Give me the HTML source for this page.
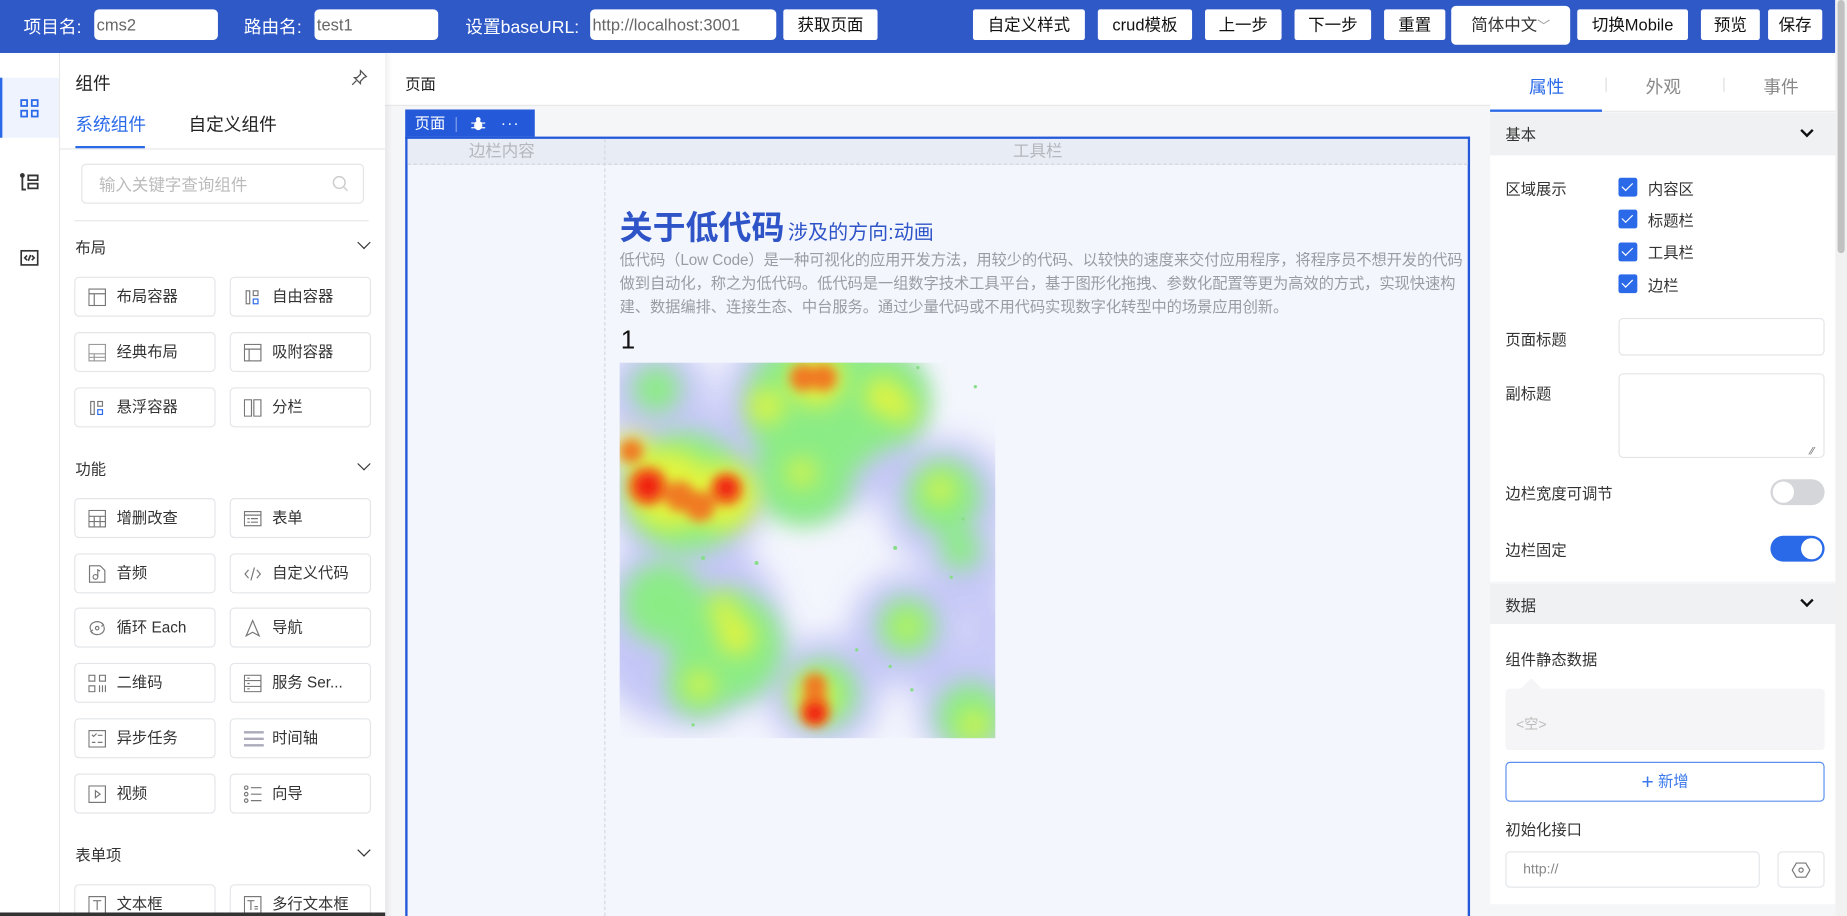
<!DOCTYPE html>
<html><head><meta charset="utf-8">
<style>
*{box-sizing:border-box;margin:0;padding:0}
html,body{width:1847px;height:916px;overflow:hidden;background:#fff}
body{font-family:"Liberation Sans","Noto Sans CJK SC",sans-serif;color:#222}
#w{position:absolute;left:0;top:0;width:1568px;height:778px;transform:scale(1.17793,1.1774);transform-origin:0 0;overflow:hidden;background:#fff}
.a{position:absolute}
.hdr{left:0;top:0;width:1558px;height:45px;background:#3059c8}
.ht{color:#fff;font-size:15px;top:12px}
.hi{top:8px;height:26px;background:#fff;border-radius:4px;font-size:14px;color:#666;padding:4px 2px;line-height:18px}
.hb{top:8px;height:26px;background:#fff;border-radius:2px;font-size:14px;color:#111;text-align:center;line-height:26px}
.rail{left:0;top:45px;width:51px;height:733px;border-right:1px solid #e8e8e8}
.btn{width:120px;height:34px;border:1px solid #e3e5e8;border-radius:4px;font-size:13px;color:#333;line-height:32px;padding-left:35px}
.btn svg{position:absolute;left:11px;top:9px}
.sec{font-size:13px;color:#333}
.chev{width:8px;height:8px;border-right:1.5px solid #333;border-bottom:1.5px solid #333;transform:rotate(45deg)}
.lbl{font-size:13px;color:#333}
.cb{width:16px;height:16px;background:#2a6ae9;border-radius:2px}
.cb:after{content:"";position:absolute;left:5px;top:2px;width:4px;height:8px;border-right:1.3px solid #fff;border-bottom:1.3px solid #fff;transform:rotate(45deg)}
.inp{border:1px solid #e3e5e8;border-radius:4px;background:#fff}
</style></head><body><div id="w">
<div class="a hdr"></div>
<div class="a ht" style="left:20px">项目名:</div>
<div class="a hi" style="left:80px;width:105px">cms2</div>
<div class="a ht" style="left:207px">路由名:</div>
<div class="a hi" style="left:267px;width:105px">test1</div>
<div class="a ht" style="left:395px">设置baseURL:</div>
<div class="a hi" style="left:501px;width:158px">http://localhost:3001</div>
<div class="a hb" style="left:665px;width:80px">获取页面</div>
<div class="a hb" style="left:826px;width:95px">自定义样式</div>
<div class="a hb" style="left:932px;width:80px">crud模板</div>
<div class="a hb" style="left:1023px;width:65px">上一步</div>
<div class="a hb" style="left:1099px;width:65px">下一步</div>
<div class="a hb" style="left:1175px;width:52px">重置</div>
<div class="a hb" style="left:1232px;top:5px;height:33px;line-height:33px;width:101px;border-radius:4px;color:#333">简体中文<span style="color:#999;font-size:11px">﹀</span></div>
<div class="a hb" style="left:1339px;width:94px">切换Mobile</div>
<div class="a hb" style="left:1444px;width:50px">预览</div>
<div class="a hb" style="left:1501px;width:46px">保存</div>
<div class="a" style="left:1558px;top:0;width:10px;height:778px;background:#f1f1f1"></div>
<div class="a" style="left:1560px;top:0;width:6px;height:215px;background:#c1c1c1;border-radius:3px"></div>

<div class="a rail"></div>
<div class="a" style="left:0;top:66px;width:50px;height:51px;background:#eef3fd;border-left:2px solid #2a6ae9"></div>
<svg class="a" style="left:17px;top:84px" width="16" height="16" viewBox="0 0 16 16" fill="none" stroke="#2a6ae9" stroke-width="1.5"><rect x="1" y="1" width="5" height="5"/><rect x="10" y="1" width="5" height="5"/><rect x="1" y="10" width="5" height="5"/><rect x="10" y="10" width="5" height="5"/></svg>
<svg class="a" style="left:17px;top:147px" width="16" height="16" viewBox="0 0 16 16" fill="none" stroke="#333" stroke-width="1.5"><circle cx="2" cy="2" r="1.3" fill="#333"/><path d="M2 3v11h3M7 2h8v4H7zM7 9h8v4H7z"/></svg>
<svg class="a" style="left:17px;top:212px" width="16" height="14" viewBox="0 0 16 14" fill="none" stroke="#333" stroke-width="1.4"><rect x="1" y="1" width="14" height="12"/><path d="M6 5L4 7l2 2M10 5l2 2-2 2M9 4.5L7 9.5"/></svg>

<div class="a" style="left:64px;top:60px;font-size:15px;color:#222">组件</div>
<svg class="a" style="left:298px;top:59px" width="14" height="14" viewBox="0 0 14 14" fill="none" stroke="#555" stroke-width="1.1"><path d="M8 1l5 5-2 1-3 3 0 2-5-5 2 0 3-3z M4.5 9.5L1 13"/></svg>
<div class="a" style="left:64px;top:95px;font-size:15px;color:#2a6ae9">系统组件</div>
<div class="a" style="left:160px;top:95px;font-size:15px;color:#222">自定义组件</div>
<div class="a" style="left:64px;top:124px;width:59px;height:2px;background:#2a6ae9"></div>
<div class="a" style="left:51px;top:126px;width:276px;height:1px;background:#e8e8e8"></div>
<div class="a inp" style="left:69px;top:139px;width:240px;height:34px;padding:7px 14px;font-size:14px;color:#bbb">输入关键字查询组件</div>
<svg class="a" style="left:282px;top:149px" width="14" height="14" viewBox="0 0 14 14" fill="none" stroke="#ccc" stroke-width="1.2"><circle cx="6" cy="6" r="5"/><path d="M10 10l3 3"/></svg>
<div class="a" style="left:63px;top:187px;width:250px;height:1px;background:#e8e8e8"></div>

<div class="a sec" style="left:64px;top:200px">布局</div><div class="a chev" style="left:305px;top:202px"></div>
<div class="a sec" style="left:64px;top:388px">功能</div><div class="a chev" style="left:305px;top:390px"></div>
<div class="a sec" style="left:64px;top:716px">表单项</div><div class="a chev" style="left:305px;top:718px"></div>

<div class="a btn" style="left:63px;top:235px"><svg width="15" height="15" viewBox="0 0 15 15" fill="none" stroke="#777"><rect x=".5" y=".5" width="14" height="14"/><path d="M.5 4.5h14M5 4.5v10"/></svg>布局容器</div>
<div class="a btn" style="left:195px;top:235px"><svg width="15" height="15" viewBox="0 0 15 15" fill="none" stroke="#777"><rect x="2" y="2" width="3" height="11"/><rect x="8" y="2" width="4" height="4"/><rect x="8" y="9" width="4" height="4" stroke="#2a6ae9"/></svg>自由容器</div>
<div class="a btn" style="left:63px;top:282px"><svg width="15" height="15" viewBox="0 0 15 15" fill="none" stroke="#999"><rect x=".5" y=".5" width="14" height="14"/><path d="M.5 8.5h14M.5 11.5h14M5 8.5v6"/></svg>经典布局</div>
<div class="a btn" style="left:195px;top:282px"><svg width="15" height="15" viewBox="0 0 15 15" fill="none" stroke="#777"><rect x=".5" y=".5" width="14" height="14"/><path d="M.5 4.5h14M4.5 4.5v10"/></svg>吸附容器</div>
<div class="a btn" style="left:63px;top:329px"><svg width="15" height="15" viewBox="0 0 15 15" fill="none" stroke="#777"><rect x="2" y="2" width="3" height="11"/><rect x="8" y="2" width="4" height="4"/><rect x="8" y="9" width="4" height="4" stroke="#2a6ae9"/></svg>悬浮容器</div>
<div class="a btn" style="left:195px;top:329px"><svg width="15" height="15" viewBox="0 0 15 15" fill="none" stroke="#777"><rect x=".5" y=".5" width="6" height="14"/><rect x="8.5" y=".5" width="6" height="14"/></svg>分栏</div>

<div class="a btn" style="left:63px;top:423px"><svg width="15" height="15" viewBox="0 0 15 15" fill="none" stroke="#777"><rect x=".5" y=".5" width="14" height="14"/><path d="M.5 5.5h14M.5 10h14M5 5.5v9M10 5.5v9"/></svg>增删改查</div>
<div class="a btn" style="left:195px;top:423px"><svg width="15" height="15" viewBox="0 0 15 15" fill="none" stroke="#777"><rect x=".5" y="1.5" width="14" height="12"/><path d="M.5 4.5h14M3 7.5h2M6 7.5h6M3 10.5h2M6 10.5h6"/></svg>表单</div>
<div class="a btn" style="left:63px;top:470px"><svg width="15" height="15" viewBox="0 0 15 15" fill="none" stroke="#777"><path d="M1 .5h9l4 4v10H1z"/><circle cx="6" cy="10" r="2"/><path d="M8 10V4l2 1"/></svg>音频</div>
<div class="a btn" style="left:195px;top:470px"><svg width="15" height="15" viewBox="0 0 15 15" fill="none" stroke="#777"><path d="M4 4L1 7.5 4 11M11 4l3 3.5-3 3.5M9 2L6 13"/></svg>自定义代码</div>
<div class="a btn" style="left:63px;top:516px"><svg width="15" height="15" viewBox="0 0 15 15" fill="none" stroke="#777"><path d="M2 9a6 5 0 0 1 11-4M13 6a6 5 0 0 1-11 4M11 3l2 2-2 1M4 12l-2-2 2-1"/><circle cx="7.5" cy="7.5" r="1.5"/></svg>循环 Each</div>
<div class="a btn" style="left:195px;top:516px"><svg width="15" height="15" viewBox="0 0 15 15" fill="none" stroke="#777"><path d="M7.5 1L2 14l5.5-3 5.5 3z"/></svg>导航</div>
<div class="a btn" style="left:63px;top:563px"><svg width="15" height="15" viewBox="0 0 15 15" fill="none" stroke="#777"><rect x=".5" y=".5" width="5" height="5"/><rect x="9.5" y=".5" width="5" height="5"/><rect x=".5" y="9.5" width="5" height="5"/><path d="M9.5 9v6M12 9v6M14.5 9v6"/></svg>二维码</div>
<div class="a btn" style="left:195px;top:563px"><svg width="15" height="15" viewBox="0 0 15 15" fill="none" stroke="#777"><rect x=".5" y=".5" width="14" height="14"/><path d="M.5 5h14M.5 10h14M3 3h2M3 7.5h2M3 12h2"/></svg>服务 Ser...</div>
<div class="a btn" style="left:63px;top:610px"><svg width="15" height="15" viewBox="0 0 15 15" fill="none" stroke="#777"><rect x=".5" y=".5" width="14" height="14"/><path d="M3 4l1.5 1.5L7 3M8 4.5h4M3 10.5h3M8 10.5h4"/></svg>异步任务</div>
<div class="a btn" style="left:195px;top:610px"><svg width="17" height="15" viewBox="0 0 17 15" fill="none" stroke="#aab" stroke-width="2"><path d="M0 2h17M0 7.5h17M0 13h17"/></svg>时间轴</div>
<div class="a btn" style="left:63px;top:657px"><svg width="15" height="15" viewBox="0 0 15 15" fill="none" stroke="#777"><rect x=".5" y=".5" width="14" height="14"/><path d="M6 4.5v6l4-3z"/></svg>视频</div>
<div class="a btn" style="left:195px;top:657px"><svg width="15" height="15" viewBox="0 0 15 15" fill="none" stroke="#777"><circle cx="2" cy="2" r="1.5"/><circle cx="2" cy="7.5" r="1.5"/><circle cx="2" cy="13" r="1.5"/><path d="M6 2h9M6 7.5h9M6 13h9"/></svg>向导</div>
<div class="a btn" style="left:63px;top:751px"><svg width="15" height="15" viewBox="0 0 15 15" fill="none" stroke="#777"><rect x=".5" y=".5" width="14" height="14"/><path d="M4 4h7M7.5 4v8"/></svg>文本框</div>
<div class="a btn" style="left:195px;top:751px"><svg width="15" height="15" viewBox="0 0 15 15" fill="none" stroke="#777"><rect x=".5" y=".5" width="14" height="14"/><path d="M3 4h6M6 4v8M9 9h3M9 11h3"/></svg>多行文本框</div>
<div class="a" style="left:0;top:775px;width:513px;height:3px;background:#333"></div>

<div class="a" style="left:327px;top:45px;width:938px;height:733px;background:#f5f6f8"></div>
<div class="a" style="left:327px;top:45px;width:938px;height:45px;background:#fff;border-bottom:1px solid #e8e8e8"></div>
<div class="a" style="left:327px;top:45px;width:6px;height:733px;background:linear-gradient(90deg,rgba(0,0,0,.06),rgba(0,0,0,0))"></div>
<div class="a" style="left:344px;top:61px;font-size:13px;color:#222">页面</div>
<div class="a" style="left:344px;top:93px;width:110px;height:24px;background:#2459d9;color:#fff;font-size:13px;line-height:24px;padding-left:8px">页面 <span style="color:#7f9ee8;margin:0 4px">|</span>
<svg style="vertical-align:-2px;margin-left:3px" width="12" height="12" viewBox="0 0 12 12" fill="#fff"><circle cx="6" cy="2.5" r="2"/><ellipse cx="6" cy="7.5" rx="3.5" ry="4"/><path d="M0 5h12v1H0zM0 9h12v1H0z"/></svg>
<span style="margin-left:10px;letter-spacing:1px">···</span></div>
<div class="a" style="left:344px;top:116px;width:904px;height:662px;border:2px solid #2459d9;border-bottom:none;background:#f3f6fd"></div>
<div class="a" style="left:346px;top:118px;width:900px;height:22px;background:#e8ecf4;border-bottom:1px dashed #d5d8de"></div>
<div class="a" style="left:513px;top:118px;width:0;height:660px;border-left:1px dashed #d5d8de"></div>
<div class="a" style="left:398px;top:118px;font-size:14px;color:#b4b7bd">边栏内容</div>
<div class="a" style="left:860px;top:118px;font-size:14px;color:#b4b7bd">工具栏</div>
<div class="a" style="left:526px;top:172px;font-size:28px;font-weight:bold;color:#2f54c8">关于低代码</div>
<div class="a" style="left:669px;top:183px;font-size:17px;color:#2f54c8">涉及的方向:动画</div>
<div class="a" style="left:526px;top:211px;width:718px;font-size:13px;line-height:20px;color:#9a9ca2;letter-spacing:-0.1px">低代码（Low Code）是一种可视化的应用开发方法，用较少的代码、以较快的速度来交付应用程序，将程序员不想开发的代码做到自动化，称之为低代码。低代码是一组数字技术工具平台，基于图形化拖拽、参数化配置等更为高效的方式，实现快速构建、数据编排、连接生态、中台服务。通过少量代码或不用代码实现数字化转型中的场景应用创新。</div>
<div class="a" style="left:527px;top:276px;font-size:22px;color:#111">1</div>

<svg class="a" style="left:526px;top:308px" width="319" height="319" viewBox="0 0 1125 1125">
<defs>
<filter id="b1" x="-50%" y="-50%" width="200%" height="200%"><feGaussianBlur stdDeviation="45"/></filter>
<filter id="b2" x="-50%" y="-50%" width="200%" height="200%"><feGaussianBlur stdDeviation="35"/></filter>
<filter id="b3" x="-50%" y="-50%" width="200%" height="200%"><feGaussianBlur stdDeviation="16"/></filter>
<clipPath id="c"><rect width="1125" height="1125"/></clipPath>
</defs>
<g clip-path="url(#c)">
<rect width="1125" height="1125" fill="#f4f6fd"/>
<g fill="#bfc1f5" filter="url(#b1)" opacity="0.9">
<circle cx="110" cy="100" r="160"/><circle cx="600" cy="150" r="300"/><circle cx="200" cy="380" r="240"/><circle cx="980" cy="420" r="190"/><circle cx="1050" cy="620" r="120"/>
<circle cx="200" cy="800" r="290"/><circle cx="610" cy="990" r="170"/><circle cx="860" cy="800" r="170"/><circle cx="1060" cy="1030" r="170"/><circle cx="1125" cy="800" r="80"/>
</g>
<g fill="#8bec86" filter="url(#b2)">
<circle cx="110" cy="80" r="70"/><circle cx="600" cy="130" r="220"/><circle cx="780" cy="110" r="150"/><circle cx="200" cy="390" r="180"/><circle cx="550" cy="340" r="150"/><circle cx="970" cy="400" r="110"/><circle cx="1020" cy="560" r="60"/>
<circle cx="130" cy="720" r="120"/><circle cx="320" cy="850" r="170"/><circle cx="240" cy="960" r="100"/><circle cx="610" cy="990" r="100"/><circle cx="860" cy="790" r="85"/><circle cx="1050" cy="1060" r="100"/>
</g>
<g fill="#e3f43c" filter="url(#b2)">
<circle cx="440" cy="130" r="50"/><circle cx="790" cy="100" r="55"/><circle cx="845" cy="140" r="40"/><circle cx="545" cy="330" r="40"/><circle cx="150" cy="380" r="120"/><circle cx="310" cy="400" r="100"/><circle cx="40" cy="260" r="50"/>
<circle cx="310" cy="740" r="40"/><circle cx="350" cy="820" r="55"/><circle cx="240" cy="965" r="40"/><circle cx="585" cy="1000" r="60"/><circle cx="960" cy="380" r="40"/><circle cx="860" cy="790" r="30"/><circle cx="1060" cy="1085" r="40"/><circle cx="590" cy="50" r="80"/>
</g>
<g fill="#f07a22" filter="url(#b3)">
<circle cx="35" cy="265" r="35"/><circle cx="85" cy="370" r="60"/><circle cx="240" cy="430" r="45"/><circle cx="320" cy="380" r="50"/><circle cx="180" cy="400" r="45"/>
<circle cx="550" cy="45" r="40"/><circle cx="610" cy="45" r="40"/><circle cx="585" cy="965" r="35"/><circle cx="585" cy="1045" r="45"/><circle cx="585" cy="1005" r="35"/>
</g>
<g fill="#f01a10" filter="url(#b3)">
<circle cx="85" cy="370" r="35"/><circle cx="320" cy="375" r="28"/><circle cx="585" cy="1050" r="28"/>
</g>
<g fill="#88dd88">
<circle cx="893" cy="15" r="5"/><circle cx="1065" cy="72" r="5"/><circle cx="825" cy="555" r="6"/><circle cx="250" cy="585" r="6"/><circle cx="410" cy="600" r="6"/><circle cx="710" cy="860" r="5"/><circle cx="810" cy="910" r="5"/><circle cx="875" cy="980" r="5"/><circle cx="993" cy="643" r="5"/><circle cx="1028" cy="468" r="5"/><circle cx="220" cy="1085" r="5"/>
</g>
</g>
</svg>

<div class="a" style="left:1265px;top:45px;width:293px;height:733px;background:#f5f6f8"></div>
<div class="a" style="left:1265px;top:45px;width:293px;height:50px;background:#fff;border-bottom:1px solid #e8e8e8"></div>
<div class="a" style="left:1298px;top:63px;font-size:15px;color:#2a6ae9">属性</div>
<div class="a" style="left:1397px;top:63px;font-size:15px;color:#888">外观</div>
<div class="a" style="left:1497px;top:63px;font-size:15px;color:#888">事件</div>
<div class="a" style="left:1363px;top:66px;width:1px;height:12px;background:#ddd"></div>
<div class="a" style="left:1463px;top:66px;width:1px;height:12px;background:#ddd"></div>
<div class="a" style="left:1265px;top:93px;width:95px;height:2px;background:#2a6ae9"></div>
<div class="a" style="left:1265px;top:96px;width:293px;height:36px;background:#f0f1f3"></div>
<div class="a lbl" style="left:1278px;top:104px">基本</div><div class="a chev" style="left:1530px;top:107px;border-color:#111;border-width:2px"></div>
<div class="a" style="left:1265px;top:132px;width:293px;height:362px;background:#fff"></div>
<div class="a lbl" style="left:1278px;top:150px">区域展示</div>
<div class="a cb" style="left:1374px;top:151px"></div><div class="a lbl" style="left:1399px;top:150px">内容区</div>
<div class="a cb" style="left:1374px;top:178px"></div><div class="a lbl" style="left:1399px;top:177px">标题栏</div>
<div class="a cb" style="left:1374px;top:206px"></div><div class="a lbl" style="left:1399px;top:204px">工具栏</div>
<div class="a cb" style="left:1374px;top:233px"></div><div class="a lbl" style="left:1399px;top:232px">边栏</div>
<div class="a lbl" style="left:1278px;top:278px">页面标题</div>
<div class="a inp" style="left:1374px;top:270px;width:175px;height:32px"></div>
<div class="a lbl" style="left:1278px;top:324px">副标题</div>
<div class="a inp" style="left:1374px;top:317px;width:175px;height:72px"></div>
<div class="a" style="left:1537px;top:378px;font-size:9px;color:#666">⁄⁄</div>
<div class="a lbl" style="left:1278px;top:409px">边栏宽度可调节</div>
<div class="a" style="left:1503px;top:407px;width:46px;height:22px;border-radius:11px;background:#d5d6d9"></div>
<div class="a" style="left:1505px;top:409px;width:18px;height:18px;border-radius:9px;background:#fff"></div>
<div class="a lbl" style="left:1278px;top:457px">边栏固定</div>
<div class="a" style="left:1503px;top:455px;width:46px;height:22px;border-radius:11px;background:#2a6ae9"></div>
<div class="a" style="left:1529px;top:457px;width:18px;height:18px;border-radius:9px;background:#fff"></div>
<div class="a" style="left:1265px;top:496px;width:293px;height:34px;background:#f0f1f3"></div>
<div class="a lbl" style="left:1278px;top:504px">数据</div><div class="a chev" style="left:1530px;top:506px;border-color:#111;border-width:2px"></div>
<div class="a" style="left:1265px;top:530px;width:293px;height:238px;background:#fff"></div>
<div class="a lbl" style="left:1278px;top:550px">组件静态数据</div>
<div class="a" style="left:1278px;top:585px;width:271px;height:52px;background:#f5f5f7;border-radius:3px"></div>
<div class="a" style="left:1290px;top:576px;width:0;height:0;border-left:10px solid transparent;border-right:10px solid transparent;border-bottom:10px solid #f5f5f7"></div>
<div class="a" style="left:1287px;top:606px;font-size:12px;color:#bbb">&lt;空&gt;</div>
<div class="a" style="left:1278px;top:647px;width:271px;height:34px;border:1px solid #5b8ff0;border-radius:4px;color:#3a78ec;font-size:13px;text-align:center;line-height:32px"><span style="font-size:18px;vertical-align:-2px">+</span> 新增</div>
<div class="a lbl" style="left:1278px;top:694px">初始化接口</div>
<div class="a inp" style="left:1278px;top:723px;width:216px;height:31px;font-size:12px;color:#888;padding:7px 14px">http://</div>
<div class="a inp" style="left:1509px;top:723px;width:40px;height:31px"></div>
<svg class="a" style="left:1521px;top:732px" width="16" height="14" viewBox="0 0 16 14" fill="none" stroke="#777"><path d="M4 1h8l3.5 6-3.5 6H4L.5 7z"/><circle cx="8" cy="7" r="1.8"/></svg>
</div></body></html>
